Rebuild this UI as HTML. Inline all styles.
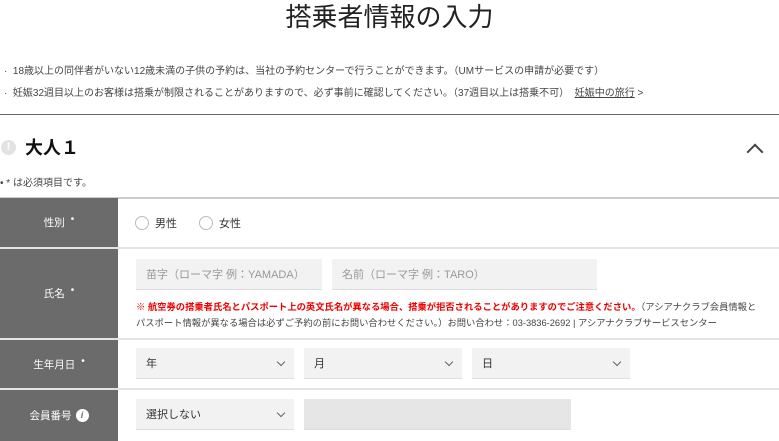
<!DOCTYPE html>
<html><head><meta charset="utf-8"><style>
*{margin:0;padding:0;box-sizing:border-box}
body{width:779px;height:441px;overflow:hidden;background:#fff;font-family:"Liberation Sans","Noto Sans CJK JP",sans-serif;color:#333;position:relative}
.a{position:absolute;white-space:nowrap}
h1{position:absolute;left:0;width:779px;top:-3px;text-align:center;font-weight:normal;font-size:26px;color:#222}
.s{font-size:10px;color:#444}
.lab{position:absolute;left:0;width:118px;background:#6b6b6b;color:#fff;font-size:10.5px;display:flex;align-items:center;justify-content:center}
.lab sup{font-size:10px;margin-left:6px;position:relative;top:-3px}
.hr{position:absolute;left:0;width:779px;height:2px;background:#e4e4e4}
.in{position:absolute;background:#f2f2f2;border-bottom:1px solid #ddd;font-size:11px;color:#999;padding-left:10px;display:flex;align-items:center;height:31px}
.sel{color:#333}
.chev{position:absolute;right:10px;top:11px;width:6px;height:6px;border-right:1.3px solid #666;border-bottom:1.3px solid #666;transform:rotate(45deg)}
.rad{position:absolute;width:14px;height:14px;border:1px solid #bbb;border-radius:50%}
</style></head><body>
<h1>搭乗者情報の入力</h1>
<div class="a s" style="left:4px;top:62px">·&nbsp; 18歳以上の同伴者がいない12歳未満の子供の予約は、当社の予約センターで行うことができます。（UMサービスの申請が必要です）</div>
<div class="a s" style="left:4px;top:84px">·&nbsp; 妊娠32週目以上のお客様は搭乗が制限されることがありますので、必ず事前に確認してください。（37週目以上は搭乗不可） &nbsp;<span style="text-decoration:underline">妊娠中の旅行</span> &gt;</div>
<div class="a" style="left:0;top:114px;width:779px;height:1px;background:#666"></div>
<div class="a" style="left:1px;top:140px;width:15px;height:15px;border-radius:50%;background:#e2e2e2;color:#fff;font-size:11px;font-weight:bold;text-align:center;line-height:15px">!</div>
<div class="a" style="left:25px;top:134px;font-size:18px;font-weight:bold;color:#111">大人１</div>
<div class="a" style="left:749px;top:146px;width:12px;height:12px;border-left:2px solid #444;border-top:2px solid #444;transform:rotate(45deg)"></div>
<div class="a s" style="left:0;top:174px">• * は必須項目です。</div>
<div class="hr" style="top:197px;background:#ccc"></div>
<div class="lab" style="top:198px;height:49px">性別<sup>•</sup></div>
<div class="rad" style="left:135px;top:216px"></div><div class="a" style="left:155px;top:215px;font-size:11px">男性</div>
<div class="rad" style="left:199px;top:216px"></div><div class="a" style="left:219px;top:215px;font-size:11px">女性</div>
<div class="hr" style="top:247px"></div>
<div class="lab" style="top:249px;height:89px">氏名<sup>•</sup></div>
<div class="in" style="left:136px;top:259px;width:186px">苗字（ローマ字 例：YAMADA）</div>
<div class="in" style="left:332px;top:259px;width:265px">名前（ローマ字 例：TARO）</div>
<div class="a" style="left:136px;top:299px;font-size:9.3px;color:#444"><span style="color:#e00;font-weight:bold">※ 航空券の搭乗者氏名とパスポート上の英文氏名が異なる場合、搭乗が拒否されることがありますのでご注意ください。</span>（アシアナクラブ会員情報と</div>
<div class="a" style="left:136px;top:315px;font-size:9.3px;color:#444">パスポート情報が異なる場合は必ずご予約の前にお問い合わせください。）お問い合わせ：03-3836-2692 | アシアナクラブサービスセンター</div>
<div class="hr" style="top:338px"></div>
<div class="lab" style="top:340px;height:48px">生年月日<sup>•</sup></div>
<div class="in sel" style="left:136px;top:348px;width:158px">年<div class="chev"></div></div>
<div class="in sel" style="left:304px;top:348px;width:158px">月<div class="chev"></div></div>
<div class="in sel" style="left:472px;top:348px;width:158px">日<div class="chev"></div></div>
<div class="hr" style="top:388px"></div>
<div class="lab" style="top:390px;height:51px">会員番号 <span style="display:inline-block;width:13px;height:13px;border-radius:50%;background:#fff;color:#6b6b6b;font-size:9px;font-style:italic;font-weight:bold;text-align:center;line-height:13px;margin-left:4px">i</span></div>
<div class="in sel" style="left:136px;top:399px;width:158px">選択しない<div class="chev"></div></div>
<div class="in" style="left:304px;top:399px;width:267px;background:#e6e6e6"></div>
</body></html>
